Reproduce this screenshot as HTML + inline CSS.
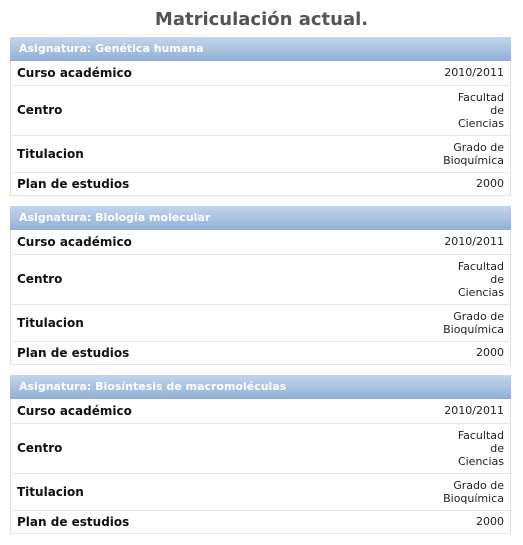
<!DOCTYPE html><html><head><style>
body{margin:0;background:#fff;font-family:"DejaVu Sans",Verdana,sans-serif;}
h1{margin:0;position:absolute;top:8px;left:0;width:523px;text-align:center;font-size:18px;color:#555;font-weight:bold;line-height:24px}
.b{position:absolute;left:10px;width:501px}
.h{height:24px;background:linear-gradient(#c2d6ec,#8fb0d6);color:#fff;font-weight:bold;font-size:11px;line-height:24px;padding-left:9px;box-sizing:border-box}
table{border-collapse:collapse;width:501px;border-left:1px solid #ddd;border-right:1px solid #ddd}
td{border-bottom:1px solid #e6e6e6;padding:0 6px;font-size:11px;color:#222}
td.l{font-weight:bold;font-size:12px;color:#111}
td.v{text-align:right;line-height:13px}
</style></head><body>
<h1>Matriculación actual.</h1>
<div class="b" style="top:37px"><div class="h">Asignatura: Genética humana</div><table>
<tr style="height:24px"><td class="l">Curso académico</td><td class="v">2010/2011</td></tr>
<tr style="height:50px"><td class="l">Centro</td><td class="v">Facultad<br>de<br>Ciencias</td></tr>
<tr style="height:37px"><td class="l">Titulacion</td><td class="v">Grado de<br>Bioquímica</td></tr>
<tr style="height:23px"><td class="l">Plan de estudios</td><td class="v">2000</td></tr></table></div>
<div class="b" style="top:206px"><div class="h">Asignatura: Biología molecular</div><table>
<tr style="height:24px"><td class="l">Curso académico</td><td class="v">2010/2011</td></tr>
<tr style="height:50px"><td class="l">Centro</td><td class="v">Facultad<br>de<br>Ciencias</td></tr>
<tr style="height:37px"><td class="l">Titulacion</td><td class="v">Grado de<br>Bioquímica</td></tr>
<tr style="height:23px"><td class="l">Plan de estudios</td><td class="v">2000</td></tr></table></div>
<div class="b" style="top:375px"><div class="h">Asignatura: Biosíntesis de macromoléculas</div><table>
<tr style="height:24px"><td class="l">Curso académico</td><td class="v">2010/2011</td></tr>
<tr style="height:50px"><td class="l">Centro</td><td class="v">Facultad<br>de<br>Ciencias</td></tr>
<tr style="height:37px"><td class="l">Titulacion</td><td class="v">Grado de<br>Bioquímica</td></tr>
<tr style="height:23px"><td class="l">Plan de estudios</td><td class="v">2000</td></tr></table></div>
</body></html>
